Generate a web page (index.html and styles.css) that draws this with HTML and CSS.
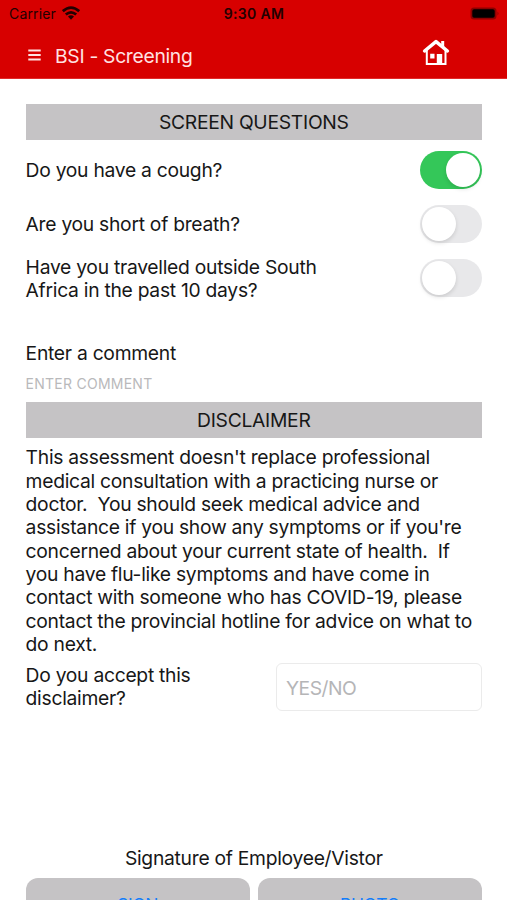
FILE: index.html
```html
<!DOCTYPE html>
<html lang="en">
<head>
<meta charset="utf-8">
<title>BSI - Screening</title>
<link rel="stylesheet" href="styles.css">
</head>
<body>
<header class="header">
  <div class="status">
    <div class="carrier"><span>Carrier</span>
      <svg class="wifi" width="18" height="14" viewBox="0 0 18 14"><g fill="none" stroke="#230000" stroke-width="2.7"><path d="M.8 5.2Q9-2 17.2 5.2"/><path d="M3.8 8.6Q9 4 14.2 8.6"/></g><path d="M6 10.5Q9 8 12 10.5L9 13.7Z" fill="#230000"/></svg>
    </div>
    <span class="time">9:30 AM</span>
    <svg class="battery" width="30" height="13" viewBox="0 0 30 13"><rect x=".5" y=".5" width="26" height="12" rx="3.5" fill="#8d0000"/><rect x="2.3" y="2.3" width="22.4" height="8.4" rx="1.8"/><path d="M27.5 4.5Q29.5 6.5 27.5 8.5Z" fill="#8d0000"/></svg>
  </div>
  <div class="nav">
    <svg class="menu" width="13" height="12" viewBox="0 0 13 12"><path d="M.3 1.5h12.4M.3 6h12.4M.3 10.5h12.4" stroke="#ffe2e2" stroke-width="1.8"/></svg>
    <h1 class="title">BSI - Screening</h1>
    <svg class="home" width="28" height="28" viewBox="0 0 28 28"><path d="M2.6 13L14 3.6l11.4 9.4" fill="none" stroke="#fff" stroke-width="3.5" stroke-linejoin="round" stroke-linecap="round"/><path d="M19.2 3h3v6.5l-3-2z" fill="#fff"/><path d="M4.8 12v14h18.7V12" fill="none" stroke="#fff" stroke-width="2"/><path d="M8.2 15.8h4.3v4.6H8.2zM14.8 16h5.4v10h-5.4z" fill="#fff"/></svg>
  </div>
</header>
<main class="content">
  <h2 class="section">SCREEN QUESTIONS</h2>
  <div class="question"><span class="question-text">Do you have a cough?</span><span class="toggle on"></span></div>
  <div class="question"><span class="question-text">Are you short of breath?</span><span class="toggle"></span></div>
  <div class="question"><span class="question-text">Have you travelled outside South<br>Africa in the past 10 days?</span><span class="toggle"></span></div>
  <div class="comment-label">Enter a comment</div>
  <div class="comment-field">ENTER COMMENT</div>
  <h2 class="section">DISCLAIMER</h2>
  <p class="disclaimer">This assessment doesn't replace professional
medical consultation with a practicing nurse or
doctor.  You should seek medical advice and
assistance if you show any symptoms or if you're
concerned about your current state of health.  If
you have flu-like symptoms and have come in
contact with someone who has COVID-19, please
contact the provincial hotline for advice on what to
do next.</p>
  <div class="accept"><span class="accept-label">Do you accept this<br>disclaimer?</span><div class="answer">YES/NO</div></div>
  <div class="signature">Signature of Employee/Vistor</div>
  <div class="actions"><div class="button">SIGN</div><div class="button">PHOTO</div></div>
</main>
</body>
</html>
```
FILE: styles.css
```css
* { box-sizing: border-box; }
html, body { height: 900px; overflow: hidden; }
body {
  margin: 0;
  background: #fff;
  color: #171717;
  font: 19.3px/23.3px Inter, "Liberation Sans", sans-serif;
  letter-spacing: -0.28px;
  white-space: nowrap;
}
.header { height: 79px; background: #d70000; border-bottom: 1px solid #e12b2b; }
.status {
  display: grid;
  grid-template-columns: 1fr auto 1fr;
  align-items: center;
  height: 27px;
  padding: 0 7px 0 9px;
  color: #230000;
  font-size: 14px;
  letter-spacing: 0.15px;
}
.carrier { display: flex; align-items: center; gap: 6px; }
.wifi { margin-top: -1px; }
.time { margin-left: -1px; font-weight: 600; letter-spacing: 0.3px; }
.battery { justify-self: end; }
.nav { display: flex; align-items: center; height: 52px; padding: 4px 57px 0 28px; }
.menu { margin-top: -1px; }
.title { margin: 3px 0 0 14px; color: #ffe2e2; font-size: 19.3px; font-weight: 400; letter-spacing: -0.3px; }
.home { margin: -6px 0 0 auto; }
.content { padding: 25px 25px 0 25.6px; }
.section {
  margin: 0;
  height: 35.5px;
  background: #c5c3c5;
  font-size: 19.3px;
  line-height: 36.4px;
  font-weight: 400;
  text-align: center;
}
.question { display: flex; align-items: center; justify-content: space-between; height: 54px; }
.question-text { padding-top: 2px; }
.section + .question { margin-top: 3.5px; }
.toggle { width: 62.4px; height: 38px; padding: 2px; border-radius: 19px; background: #e8e8ea; }
.toggle::before {
  content: "";
  display: block;
  width: 34px;
  height: 34px;
  border-radius: 50%;
  background: #fff;
  box-shadow: 0 2px 4px rgba(0, 0, 0, .13);
}
.toggle.on { background: #34c759; }
.toggle.on::before { margin-left: auto; }
.comment-label { margin-top: 37px; }
.comment-field { height: 37px; color: #b9b9bb; font-size: 14px; line-height: 38px; letter-spacing: 0.25px; }
.disclaimer { margin: 8.7px 0 0; white-space: pre; }
.accept { display: flex; justify-content: space-between; height: 48px; margin-top: 6.5px; }
.accept-label { padding-top: 1.3px; }
.answer {
  width: 206px;
  height: 48px;
  padding-left: 9px;
  border: 1px solid #ebebeb;
  border-radius: 6px;
  color: #b5b5b7;
  letter-spacing: -0.5px;
  line-height: 48px;
}
.signature { margin-top: 136.8px; text-align: center; }
.actions { display: grid; grid-template-columns: 1fr 1fr; gap: 8px; margin: 7px 0 0; }
.button {
  height: 54px;
  border-radius: 12px;
  background: #c5c3c5;
  color: #147efb;
  font-size: 17.5px;
  line-height: 54px;
  text-align: center;
}
```
